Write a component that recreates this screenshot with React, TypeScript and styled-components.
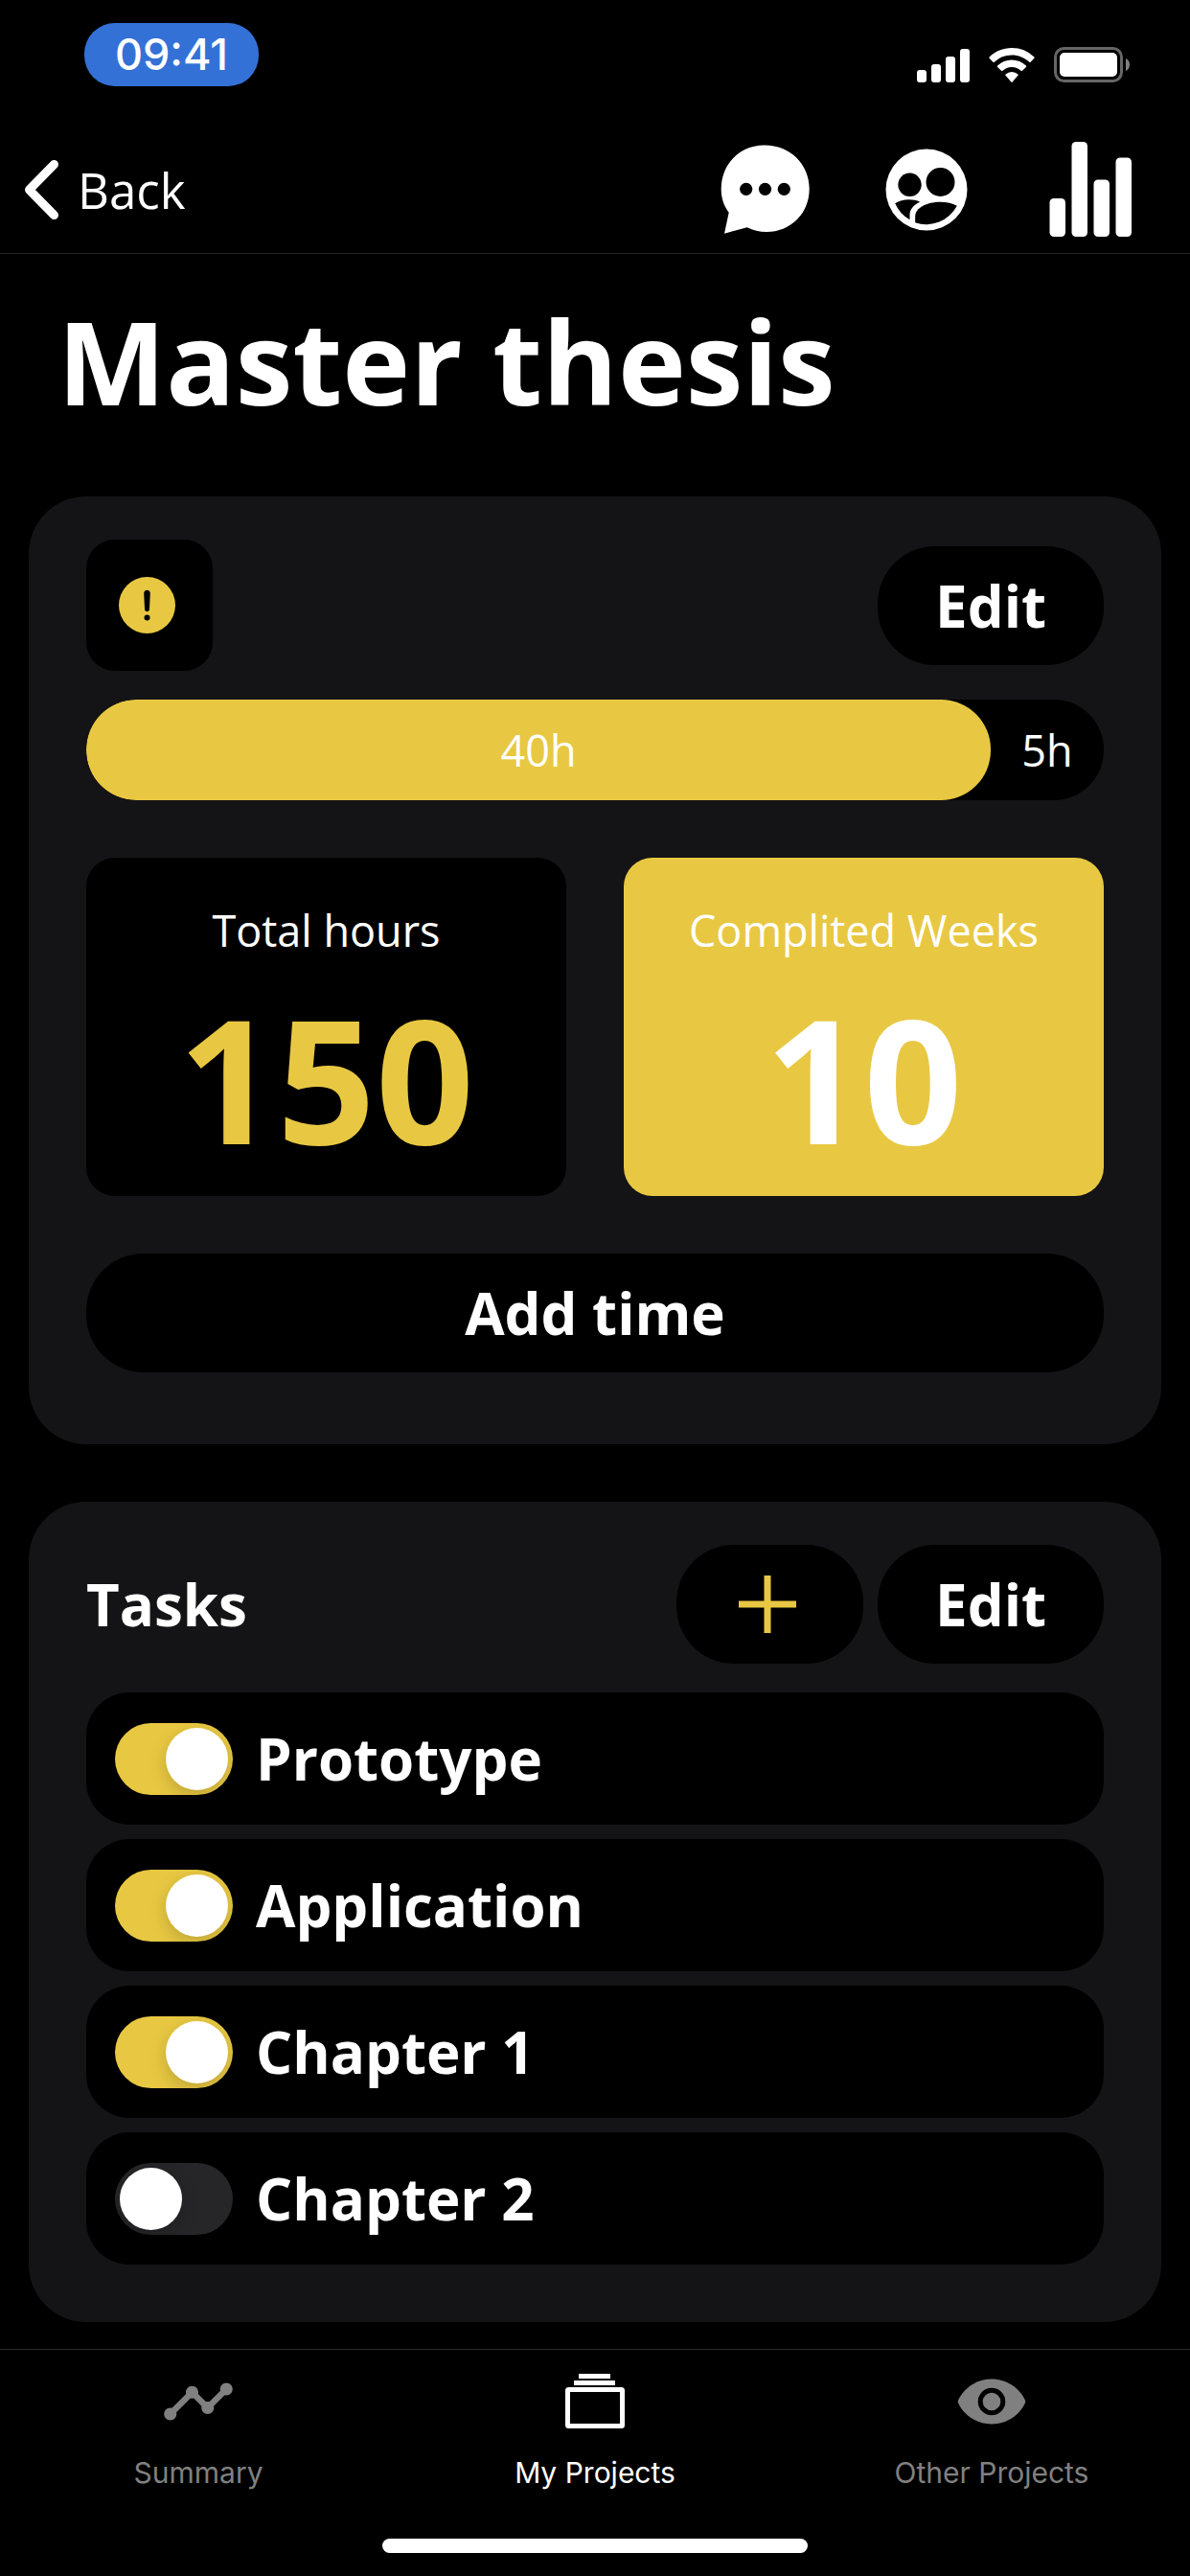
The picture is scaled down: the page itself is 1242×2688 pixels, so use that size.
import React from "react";
import styled, { createGlobalStyle } from "styled-components";
import { MdTimeline } from "react-icons/md";

const GOLD = "#e8c842";
const SURFACE = "#141416";

const GlobalStyle = createGlobalStyle`
  * { box-sizing: border-box; }
  html, body { margin: 0; background: #000; }
  body { font-family: "Open Sans", "Noto Sans", sans-serif; color: #fff; }
  h1, h2, p, ul, li { margin: 0; padding: 0; }
  ul { list-style: none; }
  svg { display: block; flex: none; }
`;

const Screen = styled.div`
  min-height: 100vh;
  display: flex;
  flex-direction: column;
  background: #000;
`;

const StatusBar = styled.div`
  height: 132px;
  padding: 24px 63px 0 88px;
  display: flex;
  justify-content: space-between;
  align-items: flex-start;
`;

const Clock = styled.time`
  width: 182px;
  height: 66px;
  border-radius: 32px;
  background: #3471d6;
  display: flex;
  align-items: center;
  justify-content: center;
  font: 500 45px/66px Inter, sans-serif;
`;

const StatusIcons = styled.div`
  display: flex;
  align-items: center;
  gap: 20px;
  padding-top: 25px;
`;

const NavBar = styled.header`
  height: 133px;
  padding: 0 60px 0 24px;
  display: flex;
  align-items: center;
  justify-content: space-between;
  border-bottom: 1px solid #262626;
`;

const BackLink = styled.a`
  display: flex;
  align-items: center;
  gap: 15px;
  color: #fff;
  text-decoration: none;
  font-size: 51px;
  line-height: 72px;
`;

const NavActions = styled.nav`
  display: flex;
  align-items: center;
  gap: 70px;
`;

const IconButton = styled.button`
  display: flex;
  padding: 0;
  border: 0;
  background: none;
  color: #fff;
`;

const Title = styled.h1`
  padding: 30px 60px;
  margin-bottom: 30px;
  font-size: 120px;
  line-height: 163px;
  font-weight: 700;
`;

const Cards = styled.main`
  flex: 1;
  display: flex;
  flex-direction: column;
  gap: 60px;
  padding: 0 30px;
`;

const Card = styled.section<{ $bottom: number }>`
  padding: 45px 60px ${(p) => p.$bottom}px;
  border-radius: 60px;
  background: ${SURFACE};
`;

const CardHeader = styled.div`
  display: flex;
  align-items: center;
  justify-content: space-between;
  margin-bottom: 30px;
`;

const Alert = styled.div`
  width: 132px;
  height: 137px;
  padding-right: 5px;
  border-radius: 30px;
  background: #000;
  display: flex;
  align-items: center;
  justify-content: center;
`;

const Pill = styled.button<{ $wide?: boolean }>`
  width: ${(p) => (p.$wide ? "100%" : "auto")};
  height: 124px;
  padding: 0 60px;
  border: 0;
  border-radius: 60px;
  background: #000;
  color: #fff;
  display: flex;
  align-items: center;
  justify-content: center;
  font: 700 60px/82px "Open Sans", "Noto Sans", sans-serif;
`;

const AddPill = styled(Pill)`
  width: 195px;
  padding: 0 5px 0 0;
`;

const Progress = styled.div`
  display: flex;
  height: 105px;
  border-radius: 52px;
  background: #000;
  overflow: hidden;
  font-size: 45px;
  line-height: 105px;
  text-align: center;
`;

const Done = styled.span`
  border-radius: 52px;
  background: ${GOLD};
`;

const Remaining = styled.span`
  flex: 1;
`;

const Stats = styled.div`
  display: grid;
  grid-template-columns: 1fr 1fr;
  gap: 60px;
  margin: 60px 0;
`;

const Stat = styled.div<{ $filled?: boolean }>`
  height: 353px;
  padding-top: 44px;
  border-radius: 30px;
  background: ${(p) => (p.$filled ? GOLD : "#000")};
  color: ${(p) => (p.$filled ? "#fff" : GOLD)};
  text-align: center;
`;

const StatLabel = styled.p`
  color: #fff;
  font-size: 45px;
  line-height: 64px;
`;

const StatValue = styled.p`
  font-size: 180px;
  line-height: 244px;
  font-weight: 700;
`;

const SectionTitle = styled.h2`
  font-size: 60px;
  line-height: 82px;
  font-weight: 700;
`;

const Actions = styled.div`
  display: flex;
  gap: 15px;
`;

const TaskList = styled.ul`
  display: flex;
  flex-direction: column;
  gap: 15px;
`;

const TaskRow = styled.label`
  display: flex;
  align-items: center;
  gap: 24px;
  height: 138px;
  padding: 0 30px;
  border-radius: 45px;
  background: #000;
  font-size: 60px;
  line-height: 82px;
  font-weight: 700;
`;

const Switch = styled.input`
  appearance: none;
  flex: none;
  display: flex;
  align-items: center;
  width: 123px;
  height: 75px;
  margin: 0;
  padding: 0 5px;
  border-radius: 38px;
  background: #262628;
  overflow: hidden;

  &::before {
    content: "";
    width: 65px;
    height: 65px;
    border-radius: 50%;
    background: #fff;
    box-shadow: 0 6px 18px rgba(0, 0, 0, 0.18);
  }

  &:checked {
    justify-content: flex-end;
    background: ${GOLD};
  }
`;

const TabBar = styled.nav`
  display: grid;
  grid-template-columns: repeat(3, 1fr);
  margin-top: 28px;
  padding-top: 15px;
  border-top: 1px solid #2a2a2a;
`;

const Tab = styled.a<{ $active?: boolean }>`
  display: flex;
  flex-direction: column;
  align-items: center;
  gap: 15px;
  color: ${(p) => (p.$active ? "#fff" : "#808080")};
  text-decoration: none;
  font: 400 30px/40px Inter, sans-serif;
`;

const HomeIndicator = styled.div`
  align-self: center;
  width: 444px;
  height: 15px;
  margin: 49px 0 24px;
  border-radius: 8px;
  background: #fff;
`;

const SignalIcon = () => (
  <svg width="55" height="36" viewBox="0 0 55 36" fill="#fff" aria-hidden="true">
    <rect x="0" y="23" width="10" height="13" rx="3" />
    <rect x="15" y="17" width="10" height="19" rx="3" />
    <rect x="30" y="9" width="10" height="27" rx="3" />
    <rect x="45" y="1" width="10" height="35" rx="3" />
  </svg>
);

const WifiIcon = () => (
  <svg width="48" height="36" viewBox="0 0 48 36" fill="#fff" aria-hidden="true">
    <path d="M24 0C15 0 6.700 3.500 .6 9.400a1 1 0 0 0 0 1.400l3.800 3.900a1 1 0 0 0 1.400 0A26.500 26.500 0 0 1 24 7.600c7 0 13.400 2.700 18.200 7.100a1 1 0 0 0 1.400 0l3.800-3.900a1 1 0 0 0 0-1.400A34 34 0 0 0 24 0z" />
    <path d="M24 12.500a21.500 21.500 0 0 0-14.900 6 1 1 0 0 0 0 1.400l3.900 3.900a1 1 0 0 0 1.400 0 14 14 0 0 1 19.200 0 1 1 0 0 0 1.400 0l3.900-3.900a1 1 0 0 0 0-1.400 21.500 21.500 0 0 0-14.900-6z" />
    <path d="M24 25a9.500 9.500 0 0 0-6.400 2.500.9.900 0 0 0 0 1.300l5.700 6.600a1 1 0 0 0 1.400 0l5.700-6.600a.9.900 0 0 0 0-1.300A9.500 9.500 0 0 0 24 25z" />
  </svg>
);

const BatteryIcon = () => (
  <svg width="79" height="37" viewBox="0 0 79 37" aria-hidden="true">
    <rect x="1.500" y="1.500" width="69" height="34" rx="9" fill="none" stroke="#666" strokeWidth="3" />
    <rect x="6" y="6" width="60" height="25" rx="5" fill="#fff" />
    <path d="M75 12c2.500 1 4 3.500 4 6.500S77.500 24 75 25z" fill="#808080" />
  </svg>
);

const ChevronIcon = () => (
  <svg width="42" height="64" viewBox="0 0 42 64" fill="none" stroke="#fff" strokeWidth="9" strokeLinecap="round" strokeLinejoin="round" aria-hidden="true">
    <path d="M32.500 5.500 6.500 32l26 26.500" />
  </svg>
);

const ChatIcon = () => (
  <svg width="94" height="94" viewBox="0 0 94 94" aria-hidden="true">
    <path fill="#fff" d="M4 92.700 8.700 70.700C3.500 64 .7 55.500 .7 46.500 .7 19.500 20.500 .4 46 .4c27 0 46.700 20 46.700 45.600C92.700 72 73 91 48 91c-7.500 0-14-1.500-20.300-4.700z" />
    <circle cx="26.700" cy="46.300" r="6.600" />
    <circle cx="46.500" cy="46.300" r="6.600" />
    <circle cx="66.300" cy="46.300" r="6.600" />
  </svg>
);

const MembersIcon = () => (
  <svg width="102" height="102" viewBox="-8.500 -8.500 102 102" aria-hidden="true">
    <circle cx="42.500" cy="42.500" r="42.500" fill="#fff" />
    <circle cx="25" cy="37.300" r="12.200" />
    <circle cx="57" cy="34.500" r="15" />
    <path d="M9.700 56.800C17 52 28 51.700 35.700 55.200 28.500 58.500 25 63.500 25 68.500v5.300A36 36 0 0 1 9.700 56.800z" />
    <path d="M30.700 76.800V70C30.700 61.500 42.500 55.200 57 55.200c6.500 0 12.500 1.500 17.300 4A36.200 36.200 0 0 1 30.700 76.800z" />
  </svg>
);

const StatsIcon = () => (
  <svg width="94" height="100" viewBox="-7 0 94 100" fill="#fff" aria-hidden="true">
    <rect x="0.500" y="59" width="16.500" height="40" rx="4.500" />
    <rect x="23.500" y="0" width="16.500" height="99" rx="4.500" />
    <rect x="46.500" y="39.500" width="16.500" height="59.500" rx="4.500" />
    <rect x="69.500" y="16.500" width="16.500" height="82.500" rx="4.500" />
  </svg>
);

const WarningIcon = () => (
  <svg width="59" height="59" viewBox="0 0 59 59" role="img" aria-label="Warning">
    <circle cx="29.500" cy="29.500" r="29.500" fill={GOLD} />
    <path d="M26.200 17c0-4.500 6.600-4.500 6.600 0L32 33.500c-.2 3.700-4.800 3.700-5 0z" />
    <circle cx="29.500" cy="42.500" r="3" />
  </svg>
);

const PlusIcon = () => (
  <svg width="60" height="60" viewBox="0 0 60 60" fill={GOLD} aria-hidden="true">
    <path d="M26.500 0h7v26.500H60v7H33.500V60h-7V33.500H0v-7h26.500z" />
  </svg>
);

const ProjectsIcon = () => (
  <svg width="78" height="78" viewBox="0 0 78 78" fill="currentColor" aria-hidden="true">
    <rect x="22" y="10" width="33" height="5" />
    <rect x="17" y="17" width="43" height="5" />
    <rect x="10.500" y="26.500" width="57" height="38" rx="1" fill="none" stroke="currentColor" strokeWidth="5" />
  </svg>
);

const EyeIcon = () => (
  <svg width="78" height="78" viewBox="0 0 78 78" fill="currentColor" aria-hidden="true">
    <path d="M4.200 37.200C10 25 23 15.500 39 15.500S68 25 73.800 37.200q.8 1.800 0 3.600C68 53 55 62.500 39 62.500S10 53 4.200 40.800q-.8-1.800 0-3.600z" />
    <circle cx="39" cy="39" r="11.800" fill="none" stroke="#000" strokeWidth="5" />
  </svg>
);

const tasks = [
  { name: "Prototype", done: true },
  { name: "Application", done: true },
  { name: "Chapter 1", done: true },
  { name: "Chapter 2", done: false },
];

const hours = { done: 40, left: 5 };

export default function App() {
  const share = (hours.done / (hours.done + hours.left)) * 100;
  return (
    <Screen>
      <GlobalStyle />
      <StatusBar>
        <Clock>09:41</Clock>
        <StatusIcons>
          <SignalIcon />
          <WifiIcon />
          <BatteryIcon />
        </StatusIcons>
      </StatusBar>
      <NavBar>
        <BackLink href="#back">
          <ChevronIcon />
          Back
        </BackLink>
        <NavActions>
          <IconButton aria-label="Chat"><ChatIcon /></IconButton>
          <IconButton aria-label="Members"><MembersIcon /></IconButton>
          <IconButton aria-label="Statistics"><StatsIcon /></IconButton>
        </NavActions>
      </NavBar>
      <Title>Master thesis</Title>
      <Cards>
        <Card $bottom={75}>
          <CardHeader>
            <Alert><WarningIcon /></Alert>
            <Pill>Edit</Pill>
          </CardHeader>
          <Progress>
            <Done style={{ width: `${share}%` }}>{hours.done}h</Done>
            <Remaining>{hours.left}h</Remaining>
          </Progress>
          <Stats>
            <Stat>
              <StatLabel>Total hours</StatLabel>
              <StatValue>150</StatValue>
            </Stat>
            <Stat $filled>
              <StatLabel>Complited Weeks</StatLabel>
              <StatValue>10</StatValue>
            </Stat>
          </Stats>
          <Pill $wide>Add time</Pill>
        </Card>
        <Card $bottom={60}>
          <CardHeader>
            <SectionTitle>Tasks</SectionTitle>
            <Actions>
              <AddPill aria-label="Add task"><PlusIcon /></AddPill>
              <Pill>Edit</Pill>
            </Actions>
          </CardHeader>
          <TaskList>
            {tasks.map((task) => (
              <li key={task.name}>
                <TaskRow>
                  <Switch type="checkbox" role="switch" defaultChecked={task.done} />
                  {task.name}
                </TaskRow>
              </li>
            ))}
          </TaskList>
        </Card>
      </Cards>
      <TabBar>
        <Tab href="#summary"><MdTimeline size={78} />Summary</Tab>
        <Tab href="#projects" $active aria-current="page"><ProjectsIcon />My Projects</Tab>
        <Tab href="#others"><EyeIcon />Other Projects</Tab>
      </TabBar>
      <HomeIndicator />
    </Screen>
  );
}
